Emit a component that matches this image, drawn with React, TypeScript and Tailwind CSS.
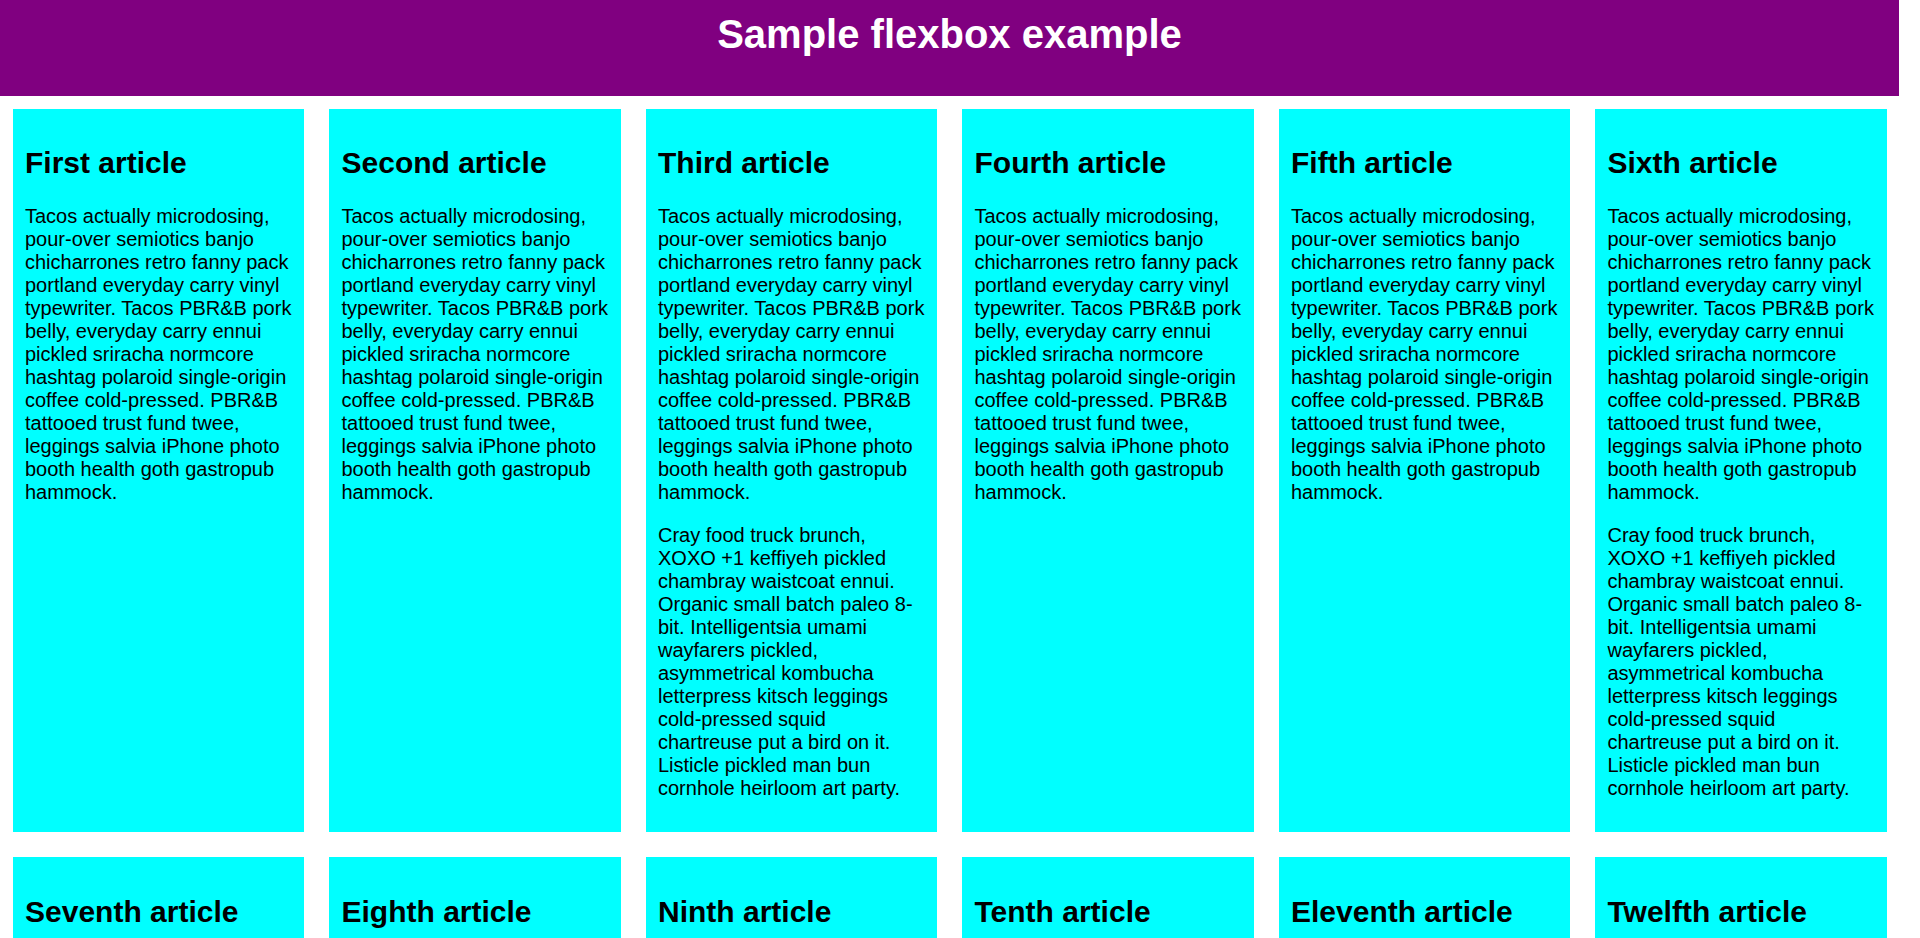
const tacos =
  "Tacos actually microdosing, pour-over semiotics banjo chicharrones retro fanny pack portland everyday carry vinyl typewriter. Tacos PBR&B pork belly, everyday carry ennui pickled sriracha normcore hashtag polaroid single-origin coffee cold-pressed. PBR&B tattooed trust fund twee, leggings salvia iPhone photo booth health goth gastropub hammock.";

const cray =
  "Cray food truck brunch, XOXO +1 keffiyeh pickled chambray waistcoat ennui. Organic small batch paleo 8-bit. Intelligentsia umami wayfarers pickled, asymmetrical kombucha letterpress kitsch leggings cold-pressed squid chartreuse put a bird on it. Listicle pickled man bun cornhole heirloom art party.";

const articles = [
  { title: "First article", extra: false },
  { title: "Second article", extra: false },
  { title: "Third article", extra: true },
  { title: "Fourth article", extra: false },
  { title: "Fifth article", extra: false },
  { title: "Sixth article", extra: true },
  { title: "Seventh article", extra: false },
  { title: "Eighth article", extra: false },
  { title: "Ninth article", extra: true },
  { title: "Tenth article", extra: false },
  { title: "Eleventh article", extra: false },
  { title: "Twelfth article", extra: true },
];

function Article({ title, extra }: { title: string; extra: boolean }) {
  return (
    <article className="bg-[#00ffff] p-[12.5px]">
      <h2 className="mt-[25px] mb-[25px] text-[30px] font-bold leading-[1.149]">{title}</h2>
      <p className="my-[20px]">{tacos}</p>
      {extra && <p className="my-[20px]">{cray}</p>}
    </article>
  );
}

export default function App() {
  return (
    <div className="w-[1899px] font-['Liberation_Sans',Arial,sans-serif] text-[20px] leading-[1.149] text-black">
      <header className="h-[96px] bg-[#800080] pt-[12px]">
        <h1 className="text-center text-[40px] font-bold leading-[1.149] text-white">Sample flexbox example</h1>
      </header>
      <section className="grid grid-cols-6 gap-[25px] p-[12.5px]">
        {articles.map((a) => (
          <Article key={a.title} title={a.title} extra={a.extra} />
        ))}
      </section>
    </div>
  );
}
